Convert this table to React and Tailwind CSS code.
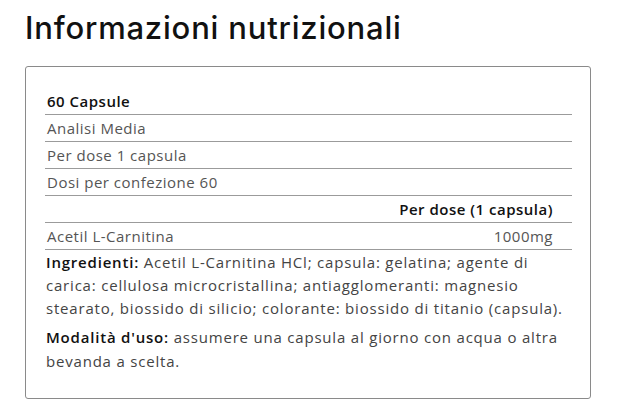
export default function App() {
  const rows = [
    { label: "60 Capsule", bold: true },
    { label: "Analisi Media" },
    { label: "Per dose 1 capsula" },
    { label: "Dosi per confezione 60" },
  ];

  return (
    <div className="min-h-screen bg-white px-[25px] pt-[8px] font-['Open_Sans',sans-serif]">
      <h1 className="font-['Inter',sans-serif] text-[31px] font-medium leading-[40px] tracking-[0.8px] text-[#111]">
        Informazioni nutrizionali
      </h1>

      <div className="mt-[18px] h-[333px] w-[566px] rounded-[3px] border border-[#8a8a8a] pl-[19px] pr-[18px] pt-[21px]">
        <div className="text-[15px] tracking-[0.5px] text-[#555]">
          {rows.map((r) => (
            <div
              key={r.label}
              className={
                "flex h-[27px] items-center border-b border-[#9b9b9b] pl-[2px] " +
                (r.bold ? "font-semibold text-[#111]" : "")
              }
            >
              {r.label}
            </div>
          ))}
          <div className="flex h-[27px] items-center justify-end border-b border-[#9b9b9b] pr-[19px] font-semibold text-[#111]">
            Per dose (1 capsula)
          </div>
          <div className="flex h-[27px] items-center justify-between border-b border-[#9b9b9b] pl-[2px] pr-[19px]">
            <span>Acetil L-Carnitina</span>
            <span>1000mg</span>
          </div>
        </div>

        <p className="mt-[1px] w-[526px] pl-[1px] text-[15px] tracking-[0.8px] leading-[23px] text-[#444]">
          <span className="font-semibold text-[#111]">Ingredienti:</span> Acetil
          L-Carnitina HCl; capsula: gelatina; agente di carica: cellulosa
          microcristallina; antiagglomeranti: magnesio stearato, biossido di
          silicio; colorante: biossido di titanio (capsula).
        </p>
        <p className="mt-[5px] w-[526px] pl-[1px] text-[15px] tracking-[0.8px] leading-[24px] text-[#444]">
          <span className="font-semibold text-[#111]">Modalità d'uso:</span>{" "}
          assumere una capsula al giorno con acqua o altra bevanda a scelta.
        </p>
      </div>
    </div>
  );
}
